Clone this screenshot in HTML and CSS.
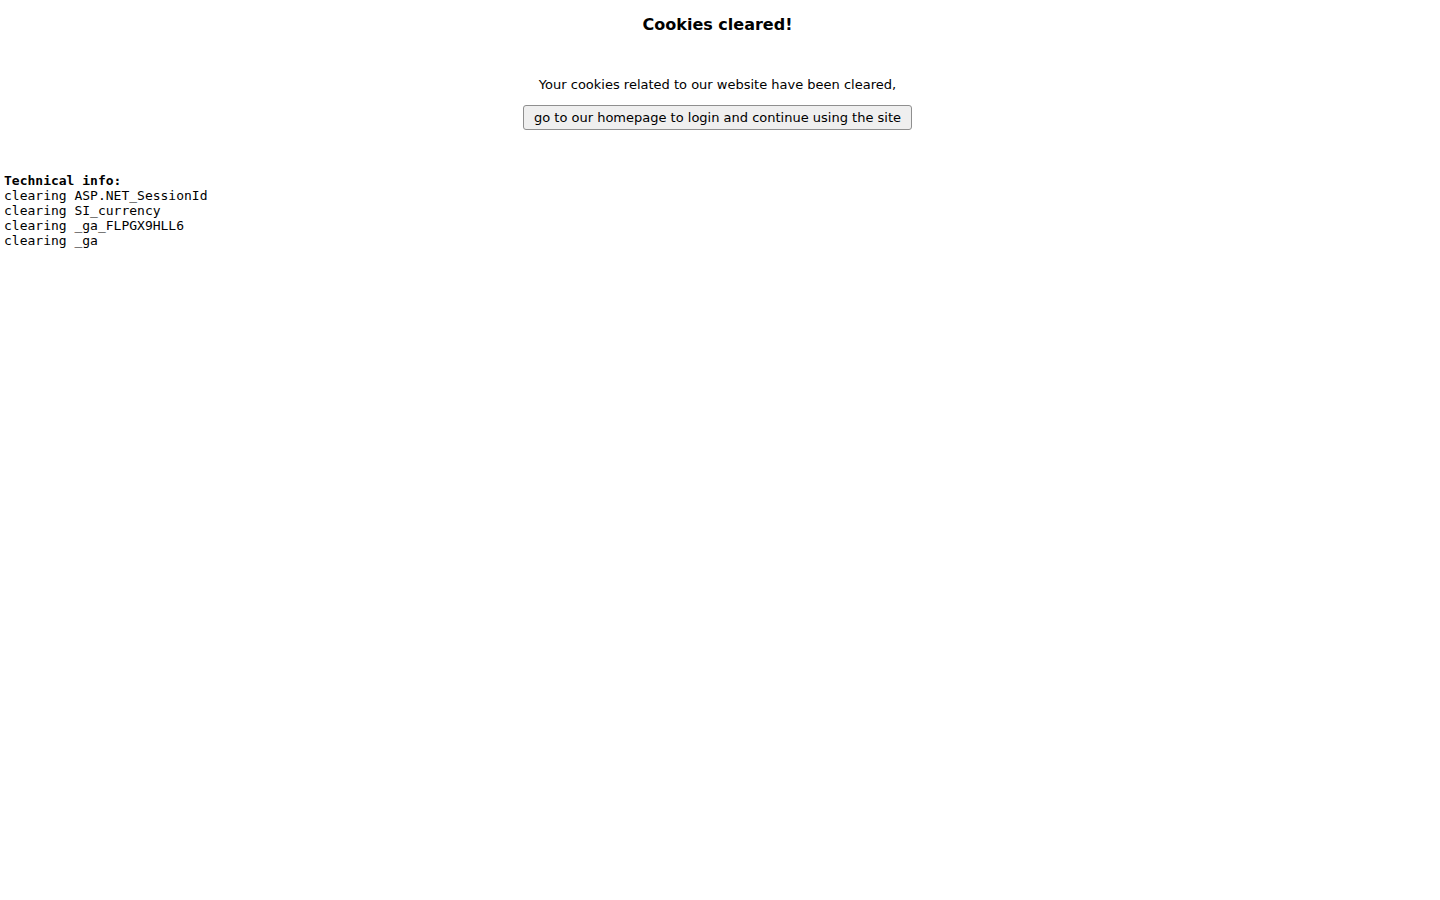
FILE: index.html
```html
<!DOCTYPE html>
<html>
<head>
<meta charset="utf-8">
<title>Cookies cleared</title>
<link rel="stylesheet" href="styles.css">
</head>
<body>
<div class="center">
<h1 class="title">Cookies cleared!</h1>
<p class="msg">Your cookies related to our website have been cleared,</p>
<button class="btn">go to our homepage to login and continue using the site</button>
</div>
<pre class="tech"><b>Technical info:</b>
clearing ASP.NET_SessionId
clearing SI_currency
clearing _ga_FLPGX9HLL6
clearing _ga</pre>
</body>
</html>
```
FILE: styles.css
```css
html, body {
  margin: 0;
  padding: 0;
  background: #fff;
}
body {
  font-family: "DejaVu Sans", sans-serif;
  font-size: 13px;
  color: #000;
}
.center {
  text-align: center;
  padding-top: 14px;
  padding-right: 5px;
}
.title {
  font-size: 16px;
  font-weight: bold;
  margin: 0 0 41px;
  line-height: 22px;
}
.msg {
  margin: 0 0 12px;
  line-height: 16px;
}
.btn {
  font-family: "DejaVu Sans", sans-serif;
  font-size: 13px;
  color: #000;
  background: #efefef;
  border: 1px solid #8f8f8f;
  border-radius: 3px;
  padding: 4px 10px;
  height: 25px;
  line-height: 15px;
}
.tech {
  font-family: "DejaVu Sans Mono", monospace;
  font-size: 13px;
  line-height: 15px;
  margin: 43px 4px 0;
}
```
